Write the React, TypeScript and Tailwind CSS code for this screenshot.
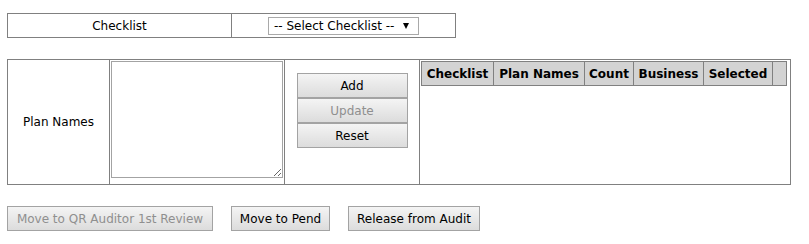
import React from "react";

const font = { fontFamily: '"DejaVu Sans", Verdana, sans-serif' };

function Btn({ label, disabled, w }: { label: string; disabled?: boolean; w: string }) {
  return (
    <div
      className={`${w} flex h-[25px] items-center justify-center border border-[#a3a3a3] bg-gradient-to-b from-[#f4f4f4] to-[#dcdcdc] text-[12px] leading-none ${
        disabled ? "text-[#8f8f8f]" : "text-black"
      }`}
    >
      {label}
    </div>
  );
}

export default function App() {
  return (
    <div className="h-[244px] w-[809px] bg-white text-[12px] text-black" style={font}>
      <div className="h-[13px]" />
      {/* Checklist row */}
      <div className="ml-[7px] flex h-[25px] w-[449px] border border-[#808080]">
        <div className="flex w-[224px] items-center justify-center border-r border-[#808080]">Checklist</div>
        <div className="flex flex-1 items-center justify-center">
          <div className="mt-[1px] flex h-[18px] w-[151px] items-center border border-[#a9a9a9] pl-[5px] pr-[3px]">
            <span className="leading-none">-- Select Checklist --</span>
            <svg width="6" height="6" viewBox="0 0 6 6" className="ml-[9px]">
              <polygon points="0,0 6,0 3,6" fill="#000" />
            </svg>
          </div>
        </div>
      </div>

      {/* Plan names row */}
      <div className="ml-[7px] mt-[21px] flex h-[126px] w-[784px] border border-[#808080]">
        <div className="flex w-[102px] items-center justify-center border-r border-[#808080]">Plan Names</div>
        <div className="w-[175px] border-r border-[#808080] px-[1px] pt-[1px]">
          <textarea className="block h-[117px] w-[172px] border border-[#a3a3a3] bg-white outline-none" />
        </div>
        <div className="flex w-[135px] flex-col items-center border-r border-[#808080] pt-[13px]">
          <Btn label="Add" w="w-[111px]" />
          <Btn label="Update" disabled w="w-[111px]" />
          <Btn label="Reset" w="w-[111px]" />
        </div>
        <div className="flex-1 pl-[1px] pt-[1px]">
          <div className="flex h-[25px] w-[366px] border border-[#808080] bg-[#d3d3d3] text-[12px] font-bold leading-none">
            <div className="flex w-[72px] items-center justify-center border-r border-[#808080]">Checklist</div>
            <div className="flex w-[91px] items-center justify-center border-r border-[#808080]">Plan Names</div>
            <div className="flex w-[49px] items-center justify-center border-r border-[#808080]">Count</div>
            <div className="flex w-[70px] items-center justify-center border-r border-[#808080]">Business</div>
            <div className="flex w-[69px] items-center justify-center border-r border-[#808080]">Selected</div>
            <div className="w-[13px]" />
          </div>
        </div>
      </div>

      {/* Bottom buttons */}
      <div className="ml-[7px] mt-[21px] flex gap-[18px]">
        <Btn label="Move to QR Auditor 1st Review" disabled w="w-[206px]" />
        <Btn label="Move to Pend" w="w-[99px]" />
        <Btn label="Release from Audit" w="w-[132px]" />
      </div>
    </div>
  );
}
